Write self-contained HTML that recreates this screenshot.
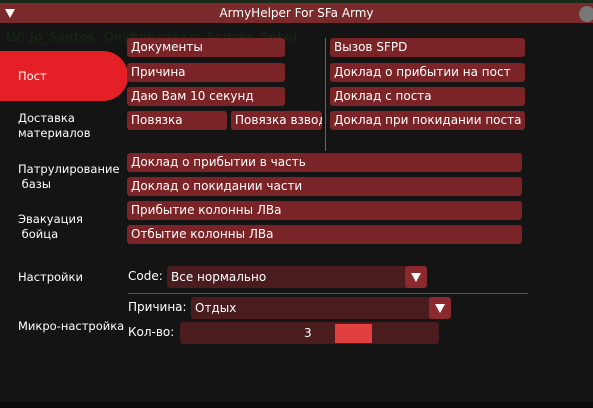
<!DOCTYPE html><html><head><meta charset="utf-8"><style>
body{margin:0;width:593px;height:408px;background:#0b0b0b;overflow:hidden;position:relative;font-family:"DejaVu Sans","Liberation Sans",sans-serif;color:#fff;font-size:12px}
.a{position:absolute}
.b{position:absolute;background:#7b2428;border-radius:3px;height:19px;line-height:19px;padding-left:4px;box-sizing:border-box;white-space:nowrap;overflow:hidden;font-size:12px}
.l{position:absolute;font-size:11.5px;line-height:15px}
.dd{position:absolute;background:#4a1c1e;border-radius:3px;line-height:22px;padding-left:4px;box-sizing:border-box;font-size:12px}
.ar{position:absolute;right:0;top:0;width:22px;height:100%;background:#8a2a2e;border-radius:3px}
.ar:after{content:"";position:absolute;left:6px;top:7px;border-left:5px solid transparent;border-right:5px solid transparent;border-top:9px solid #fff}
</style></head><body>
<div class="a" style="left:0;top:0;width:593px;height:3px;background:#1a2a1a"></div>
<div class="a" style="left:0;top:3px;width:593px;height:399px;background:#141414"></div>
<div class="a" style="left:0;top:3px;width:593px;height:20px;background:#7b2a2c;text-align:center;line-height:20px;font-size:12px">ArmyHelper For SFa Army</div>
<div class="a" style="left:5px;top:9px;border-left:5px solid transparent;border-right:5px solid transparent;border-top:9px solid #fff"></div>
<div class="a" style="left:579px;top:6px;width:16px;height:16px;border-radius:50%;background:#777"></div>
<div class="a" style="left:6px;top:30px;color:#142414;font-size:12px;font-weight:bold">LV: Jo_Santos. Опубликовал: Andrea_Sokol</div>
<div class="a" style="left:0;top:51px;width:128px;height:50px;background:#e41f26;border-radius:0 26px 26px 0"></div>
<div class="l" style="left:18px;top:69px">Пост</div>
<div class="l" style="left:18px;top:111px">Доставка<br>материалов</div>
<div class="l" style="left:18px;top:162px">Патрулирование<br>&nbsp;базы</div>
<div class="l" style="left:18px;top:212px">Эвакуация<br>&nbsp;бойца</div>
<div class="l" style="left:18px;top:270px">Настройки</div>
<div class="l" style="left:18px;top:319px">Микро-настройка</div>
<div class="b" style="left:127px;top:38px;width:158px">Документы</div>
<div class="b" style="left:127px;top:63px;width:158px">Причина</div>
<div class="b" style="left:127px;top:87px;width:158px">Даю Вам 10 секунд</div>
<div class="b" style="left:127px;top:111px;width:100px">Повязка</div>
<div class="b" style="left:231px;top:111px;width:91px">Повязка взвода</div>
<div class="a" style="left:325px;top:38px;width:1px;height:113px;background:#666"></div>
<div class="b" style="left:330px;top:38px;width:195px">Вызов SFPD</div>
<div class="b" style="left:330px;top:63px;width:195px">Доклад о прибытии на пост</div>
<div class="b" style="left:330px;top:87px;width:195px">Доклад с поста</div>
<div class="b" style="left:330px;top:111px;width:195px">Доклад при покидании поста</div>
<div class="b" style="left:127px;top:153px;width:395px">Доклад о прибытии в часть</div>
<div class="b" style="left:127px;top:177px;width:395px">Доклад о покидании части</div>
<div class="b" style="left:127px;top:201px;width:395px">Прибытие колонны ЛВа</div>
<div class="b" style="left:127px;top:225px;width:395px">Отбытие колонны ЛВа</div>
<div class="l" style="left:128px;top:269px;font-size:12px">Code:</div>
<div class="dd" style="left:167px;top:266px;width:260px;height:22px">Все нормально<div class="ar"></div></div>
<div class="a" style="left:128px;top:293px;width:400px;height:1px;background:#555"></div>
<div class="l" style="left:128px;top:300px;font-size:12px">Причина:</div>
<div class="dd" style="left:191px;top:297px;width:260px;height:22px">Отдых<div class="ar"></div></div>
<div class="l" style="left:128px;top:325px;font-size:12px">Кол-во:</div>
<div class="dd" style="left:180px;top:322px;width:259px;height:22px;padding:0"></div>
<div class="a" style="left:304px;top:326px;font-size:12px">3</div>
<div class="a" style="left:335px;top:324px;width:37px;height:19px;background:#e04040"></div>
</body></html>
